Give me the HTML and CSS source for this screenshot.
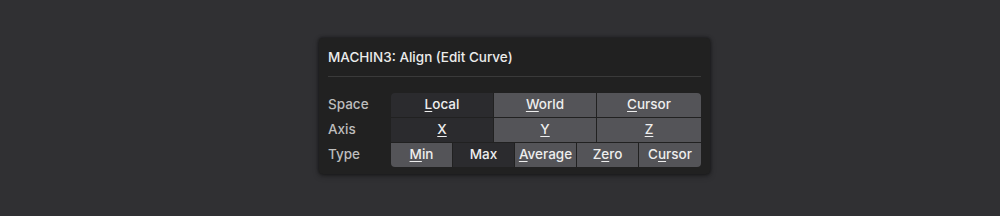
FILE: index.html
```html
<!DOCTYPE html>
<html>
<head>
<meta charset="utf-8">
<link rel="stylesheet" href="styles.css">
</head>
<body>
<div class="stage">
  <div class="panel">
    <div class="title">MACHIN3: Align (Edit Curve)</div>
    <div class="sep"></div>
    <div class="rows">
      <div class="label">Space</div>
      <div class="group g3 top">
        <div class="btn on"><u>L</u>ocal</div>
        <div class="btn"><u>W</u>orld</div>
        <div class="btn"><u>C</u>ursor</div>
      </div>
      <div class="label">Axis</div>
      <div class="group g3 mid">
        <div class="btn on"><u>X</u></div>
        <div class="btn"><u>Y</u></div>
        <div class="btn"><u>Z</u></div>
      </div>
      <div class="label">Type</div>
      <div class="group g5 bot">
        <div class="btn"><u>M</u>in</div>
        <div class="btn on">Max</div>
        <div class="btn"><u>A</u>verage</div>
        <div class="btn">Z<u>e</u>ro</div>
        <div class="btn">C<u>u</u>rsor</div>
      </div>
    </div>
  </div>
</div>
</body>
</html>
```
FILE: styles.css
```css
html, body {
  margin: 0;
  padding: 0;
  background: #303033;
  width: 1000px;
  height: 216px;
  overflow: hidden;
  font-family: Inter, "Noto Sans", sans-serif;
}
.stage {
  padding-top: 38px;
  padding-left: 319px;
}
.panel {
  width: 391px;
  height: 136px;
  box-sizing: border-box;
  background: #212121;
  border-radius: 4px;
  box-shadow: 0 0 3px 1px rgba(0,0,0,0.35), 0 2px 6px rgba(0,0,0,0.3);
  padding: 0 9px;
}
.title {
  color: #ececec;
  font-size: 13.5px;
  font-weight: 500;
  height: 38px;
  line-height: 38px;
}
.sep {
  height: 1px;
  background: #3a3a3a;
  margin-bottom: 16px;
}
.rows {
  display: grid;
  grid-template-columns: 63px 1fr;
  grid-auto-rows: 24px;
  row-gap: 1px;
}
.label {
  color: #bdbdbd;
  font-size: 13.5px;
  font-weight: 500;
  line-height: 22px;
}
.group {
  display: grid;
  column-gap: 1px;
  background: #212121;
}
.g3 { grid-template-columns: 102px 102px 1fr; }
.g5 { grid-template-columns: 61px 61px 61px 61px 1fr; }
.btn {
  background: #545458;
  color: #eeeeee;
  font-size: 13.5px;
  font-weight: 500;
  text-align: center;
  line-height: 22px;
  white-space: nowrap;
}
.btn.on {
  background: #2b2b2e;
}
.btn u {
  text-decoration-thickness: 1px;
  text-underline-offset: 2px;
}
.top .btn:first-child { border-top-left-radius: 4px; }
.top .btn:last-child { border-top-right-radius: 4px; }
.bot .btn:first-child { border-bottom-left-radius: 4px; }
.bot .btn:last-child { border-bottom-right-radius: 4px; }
```
